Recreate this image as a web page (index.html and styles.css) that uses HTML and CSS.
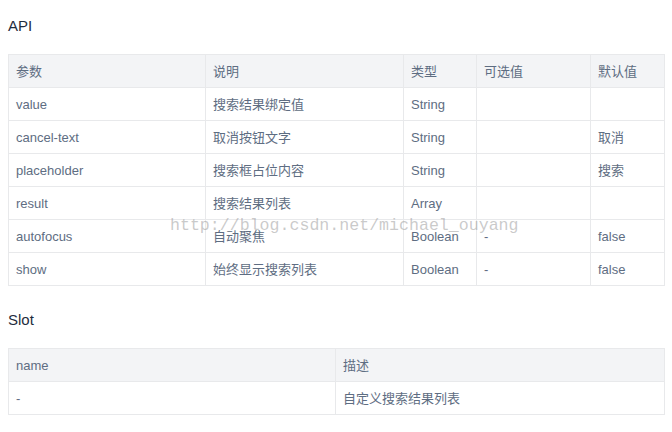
FILE: index.html
```html
<!DOCTYPE html>
<html lang="zh">
<head>
<meta charset="utf-8">
<link rel="stylesheet" href="styles.css">
</head>
<body>
<div class="page">
  <h3 class="title title-api">API</h3>
  <table class="tbl tbl-api">
    <colgroup>
      <col class="c1"><col class="c2"><col class="c3"><col class="c4"><col class="c5">
    </colgroup>
    <thead>
      <tr><th>参数</th><th>说明</th><th>类型</th><th>可选值</th><th>默认值</th></tr>
    </thead>
    <tbody>
      <tr><td>value</td><td>搜索结果绑定值</td><td>String</td><td></td><td></td></tr>
      <tr><td>cancel-text</td><td>取消按钮文字</td><td>String</td><td></td><td>取消</td></tr>
      <tr><td>placeholder</td><td>搜索框占位内容</td><td>String</td><td></td><td>搜索</td></tr>
      <tr><td>result</td><td>搜索结果列表</td><td>Array</td><td></td><td></td></tr>
      <tr><td>autofocus</td><td>自动聚焦</td><td>Boolean</td><td>-</td><td>false</td></tr>
      <tr><td>show</td><td>始终显示搜索列表</td><td>Boolean</td><td>-</td><td>false</td></tr>
    </tbody>
  </table>
  <h3 class="title title-slot">Slot</h3>
  <table class="tbl tbl-slot">
    <colgroup><col class="s1"><col class="s2"></colgroup>
    <thead><tr><th>name</th><th>描述</th></tr></thead>
    <tbody><tr><td>-</td><td>自定义搜索结果列表</td></tr></tbody>
  </table>
  <div class="watermark">http://blog.csdn.net/michael_ouyang</div>
</div>
</body>
</html>
```
FILE: styles.css
```css
html, body {
  margin: 0;
  padding: 0;
  background: #fff;
}
.page {
  position: relative;
  padding: 0 8px;
  font-family: "Liberation Sans", Arial, "Noto Sans CJK SC", sans-serif;
  color: #5e6d82;
}
.title {
  margin: 0;
  font-weight: normal;
  font-size: 15px;
  color: #1f2d3d;
  line-height: 18px;
}
.title-api {
  padding-top: 17px;
  padding-bottom: 19px;
}
.title-slot {
  padding-top: 25px;
  padding-bottom: 19px;
}
.tbl {
  width: 656px;
  border-collapse: collapse;
  table-layout: fixed;
  font-size: 13px;
}
.tbl th, .tbl td {
  border: 1px solid #e8e9eb;
  padding: 1px 7px 0;
  line-height: 31px;
  text-align: left;
  font-weight: normal;
  color: #5e6d82;
  white-space: nowrap;
}
.tbl th {
  background: #f3f4f6;
}
.c1 { width: 197px; }
.c2 { width: 198px; }
.c3 { width: 73px; }
.c4 { width: 114px; }
.c5 { width: 74px; }
.s1 { width: 327px; }
.s2 { width: 329px; }
.watermark {
  position: absolute;
  left: 170px;
  top: 216px;
  font-family: "Liberation Mono", "DejaVu Sans Mono", monospace;
  font-size: 16.6px;
  color: rgba(150, 150, 150, 0.5);
  pointer-events: none;
  white-space: nowrap;
}
```
